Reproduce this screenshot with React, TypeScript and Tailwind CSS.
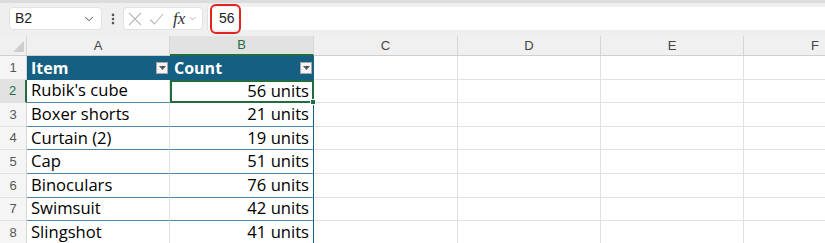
import React from "react";
import { ChevronDown, EllipsisVertical } from "lucide-react";

const cols = [
  { l: "A", w: 143 },
  { l: "B", w: 144 },
  { l: "C", w: 144 },
  { l: "D", w: 143 },
  { l: "E", w: 143 },
  { l: "F", w: 143 },
];

const data: [string, string][] = [
  ["Rubik's cube", "56 units"],
  ["Boxer shorts", "21 units"],
  ["Curtain (2)", "19 units"],
  ["Cap", "51 units"],
  ["Binoculars", "76 units"],
  ["Swimsuit", "42 units"],
  ["Slingshot", "41 units"],
];

const FilterBtn = () => (
  <div className="absolute right-[2px] top-1/2 -translate-y-1/2 w-[12px] h-[12px] bg-[#f4f4f4] border border-[#a9a9a9] flex items-center justify-center">
    <svg width="7" height="4" viewBox="0 0 7 4">
      <path d="M0 0 L7 0 L3.5 4 Z" fill="#555" />
    </svg>
  </div>
);

export default function App() {
  const font = { fontFamily: '"Open Sans", "Liberation Sans", sans-serif' };
  return (
    <div className="w-[825px] h-[243px] overflow-hidden bg-white relative" style={font}>
      {/* Toolbar */}
      <div className="h-[36px] bg-[#efefef] border-t-[3px] border-[#dcdcdc] flex items-start pt-[4px] relative">
        <div className="ml-[9px] w-[93px] h-[23px] bg-white rounded-[4px] border border-[#e2e2e2] flex items-center justify-between pl-[5px] pr-[5px]">
          <span className="text-[14px] text-[#222]" style={{ fontFamily: '"Liberation Sans", sans-serif' }}>B2</span>
          <ChevronDown size={14} strokeWidth={1.6} color="#444" />
        </div>
        <div className="w-[21px] h-[23px] flex items-center justify-center">
          <EllipsisVertical size={14} strokeWidth={2.5} color="#555" />
        </div>
        <div className="w-[80px] h-[23px] bg-white rounded-[4px] border border-[#e2e2e2] flex items-center pl-[4px]">
          <svg width="14" height="14" viewBox="0 0 14 14" className="shrink-0">
            <path d="M1 1 L13 13 M13 1 L1 13" stroke="#b8b8b8" strokeWidth="1.1" fill="none" />
          </svg>
          <svg width="15" height="12" viewBox="0 0 15 12" className="shrink-0 ml-[7px]">
            <path d="M1 6.5 L5.5 11 L14 1" stroke="#b8b8b8" strokeWidth="1.1" fill="none" />
          </svg>
          <span className="italic text-[17px] text-[#333] leading-none ml-[9px]" style={{ fontFamily: '"Liberation Serif", serif' }}>fx</span>
          <ChevronDown size={11} strokeWidth={1.5} color="#999" className="ml-[2px]" />
        </div>
        <div className="ml-[4px] flex-1 h-[23px] bg-white border-l border-[#e2e2e2] flex items-center pl-[11px]">
          <span className="text-[14px] text-[#222]" style={{ fontFamily: '"Liberation Sans", sans-serif' }}>56</span>
        </div>
        <div className="absolute left-[210px] top-[1px] w-[31px] h-[30px] border-2 border-[#e3231c] rounded-[6px]" />
      </div>

      {/* Column headers */}
      <div className="flex h-[20px] bg-[#f0f0f0] border-b border-[#cfcfcf]">
        <div className="w-[27px] shrink-0 relative border-r border-[#d6d6d6]">
          <svg className="absolute right-[2px] bottom-[3px]" width="11" height="11" viewBox="0 0 11 11">
            <path d="M11 0 L11 11 L0 11 Z" fill="#cdcdcd" />
          </svg>
        </div>
        {cols.map((c) => (
          <div
            key={c.l}
            className={
              c.l === "B"
                ? "shrink-0 flex items-center justify-center text-[13px] text-[#1e6e42] bg-[#e2e2e2] border-b-2 border-[#1e6e42] border-r border-r-[#d6d6d6] h-[20px]"
                : "shrink-0 flex items-center justify-center text-[13px] text-[#444] border-r border-[#d6d6d6]"
            }
            style={{ width: c.w, fontFamily: '"Liberation Sans", sans-serif' }}
          >
            {c.l}
          </div>
        ))}
      </div>

      {/* Row 1 header */}
      <div className="flex h-[23.6px]">
        <div className="w-[27px] shrink-0 bg-[#f5f5f5] border-r border-[#d6d6d6] border-b border-b-[#e1e1e1] flex items-center justify-center text-[13px] text-[#555]" style={{ fontFamily: '"Liberation Sans", sans-serif' }}>1</div>
        <div className="w-[143px] shrink-0 bg-[#156082] relative flex items-center pl-[4px] text-white font-bold text-[16px]">
          Item
          <FilterBtn />
        </div>
        <div className="w-[144px] shrink-0 bg-[#156082] relative flex items-center pl-[4px] text-white font-bold text-[16px]">
          Count
          <FilterBtn />
        </div>
        {[144, 143, 143, 143].map((w, i) => (
          <div key={i} className="shrink-0 border-r border-b border-[#e1e1e1]" style={{ width: w }} />
        ))}
      </div>

      {data.map(([a, b], i) => {
        const row = i + 2;
        const sel = row === 2;
        return (
          <div key={row} className="flex h-[23.6px]">
            <div
              className={
                sel
                  ? "w-[27px] shrink-0 bg-[#e2e2e2] border-r-2 border-[#1e6e42] border-b border-b-[#e1e1e1] flex items-center justify-center text-[13px] text-[#1e6e42]"
                  : "w-[27px] shrink-0 bg-[#f5f5f5] border-r border-[#d6d6d6] border-b border-b-[#e1e1e1] flex items-center justify-center text-[13px] text-[#555]"
              }
              style={{ fontFamily: '"Liberation Sans", sans-serif' }}
            >
              {row}
            </div>
            <div className="w-[143px] shrink-0 border-r border-[#e1e1e1] border-b border-b-[#4f86a8] flex items-center pl-[4px] text-[16.6px] text-black">
              {a}
            </div>
            <div
              className={
                sel
                  ? "w-[144px] shrink-0 relative border-2 border-[#1e6e42] flex items-center justify-end pr-[3px] text-[16.6px] text-black"
                  : "w-[144px] shrink-0 border-r border-r-[#156082] border-b border-b-[#4f86a8] flex items-center justify-end pr-[4px] text-[16.6px] text-black"
              }
            >
              {b}
              {sel && (
                <div className="absolute -right-[4px] -bottom-[4px] w-[6px] h-[6px] bg-[#1e6e42] border border-white" />
              )}
            </div>
            {[144, 143, 143, 143].map((w, j) => (
              <div key={j} className="shrink-0 border-r border-b border-[#e1e1e1]" style={{ width: w }} />
            ))}
          </div>
        );
      })}
    </div>
  );
}
